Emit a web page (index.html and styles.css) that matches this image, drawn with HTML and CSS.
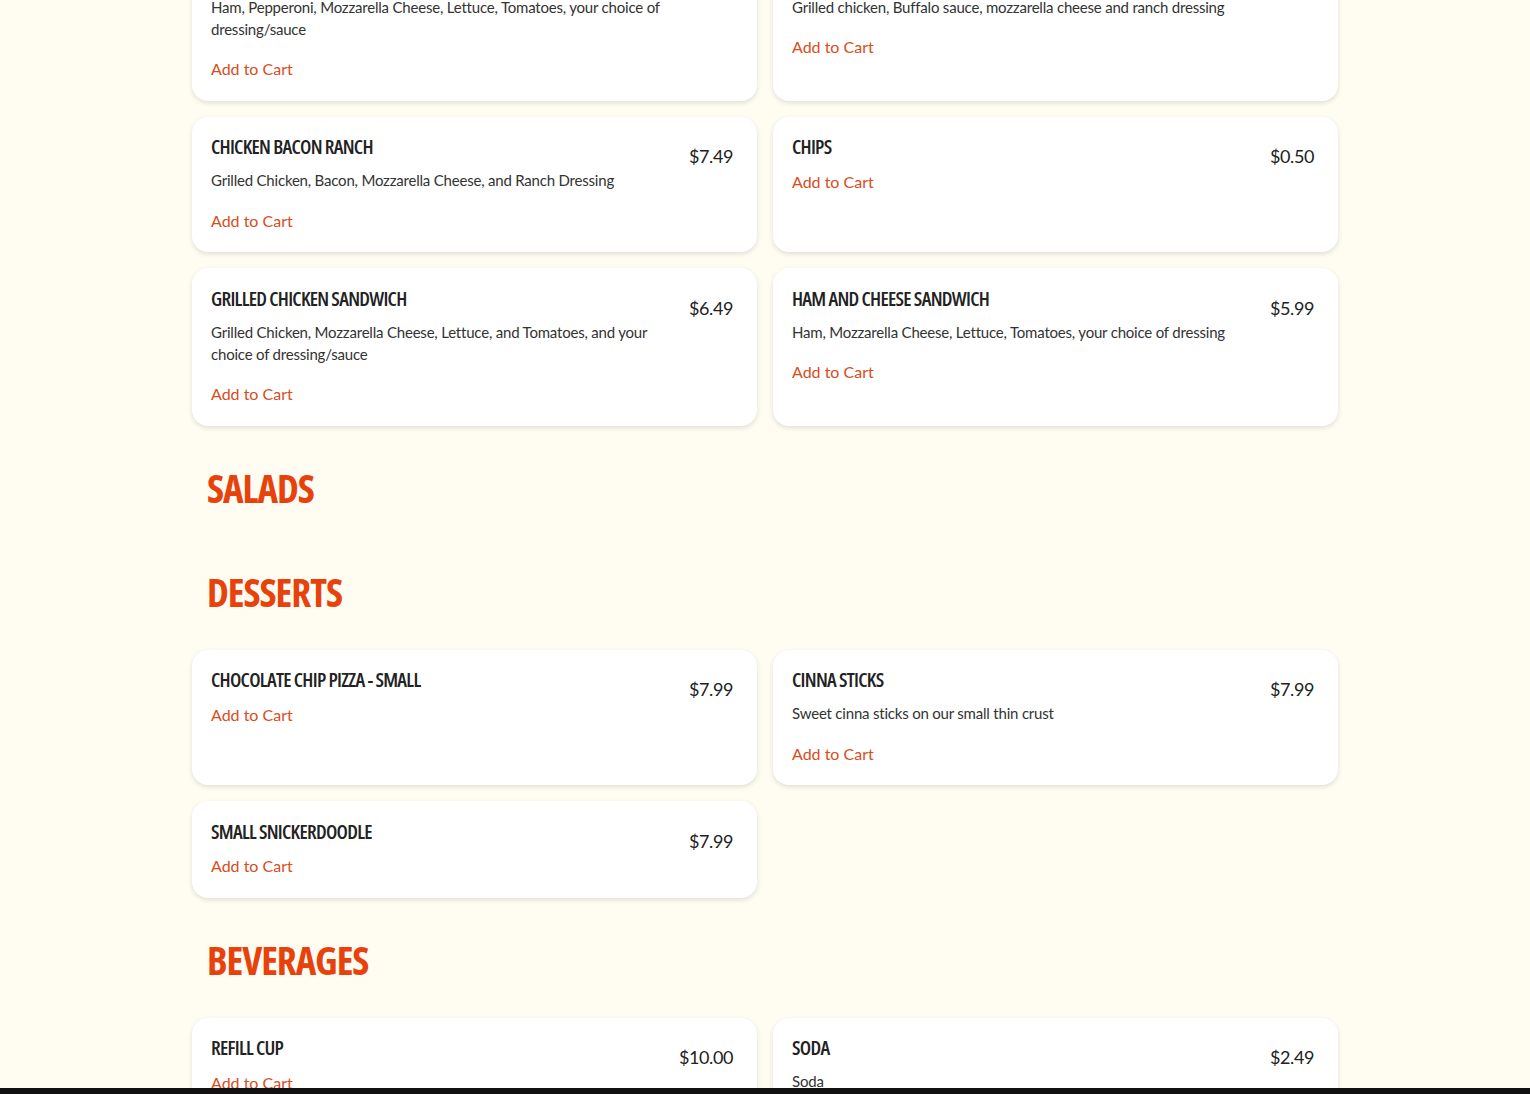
FILE: index.html
```html
<!DOCTYPE html>
<html lang="en">
<head>
<meta charset="utf-8">
<title>Menu</title>
<link rel="stylesheet" href="styles.css">
</head>
<body>
<main class="menu">
  <section class="section section-first">
    <div class="grid">
      <article class="card">
        <div class="info">
          <h3 class="title">Italian Sandwich</h3>
          <p class="desc">Ham, Pepperoni, Mozzarella Cheese, Lettuce, Tomatoes, your choice of dressing/sauce</p>
          <a class="add" href="#">Add to Cart</a>
        </div>
        <div class="price">$6.49</div>
      </article>
      <article class="card">
        <div class="info">
          <h3 class="title">Buffalo Chicken Sandwich</h3>
          <p class="desc">Grilled chicken, Buffalo sauce, mozzarella cheese and ranch dressing</p>
          <a class="add" href="#">Add to Cart</a>
        </div>
        <div class="price">$7.49</div>
      </article>
      <article class="card">
        <div class="info">
          <h3 class="title">Chicken Bacon Ranch</h3>
          <p class="desc">Grilled Chicken, Bacon, Mozzarella Cheese, and Ranch Dressing</p>
          <a class="add" href="#">Add to Cart</a>
        </div>
        <div class="price">$7.49</div>
      </article>
      <article class="card">
        <div class="info">
          <h3 class="title">Chips</h3>
          <a class="add" href="#">Add to Cart</a>
        </div>
        <div class="price">$0.50</div>
      </article>
      <article class="card">
        <div class="info">
          <h3 class="title">Grilled Chicken Sandwich</h3>
          <p class="desc">Grilled Chicken, Mozzarella Cheese, Lettuce, and Tomatoes, and your choice of dressing/sauce</p>
          <a class="add" href="#">Add to Cart</a>
        </div>
        <div class="price">$6.49</div>
      </article>
      <article class="card">
        <div class="info">
          <h3 class="title">Ham and Cheese Sandwich</h3>
          <p class="desc">Ham, Mozzarella Cheese, Lettuce, Tomatoes, your choice of dressing</p>
          <a class="add" href="#">Add to Cart</a>
        </div>
        <div class="price">$5.99</div>
      </article>
    </div>
  </section>

  <section class="section">
    <h2 class="section-title">Salads</h2>
  </section>

  <section class="section">
    <h2 class="section-title">Desserts</h2>
    <div class="grid">
      <article class="card">
        <div class="info">
          <h3 class="title">Chocolate Chip Pizza - Small</h3>
          <a class="add" href="#">Add to Cart</a>
        </div>
        <div class="price">$7.99</div>
      </article>
      <article class="card">
        <div class="info">
          <h3 class="title">Cinna Sticks</h3>
          <p class="desc">Sweet cinna sticks on our small thin crust</p>
          <a class="add" href="#">Add to Cart</a>
        </div>
        <div class="price">$7.99</div>
      </article>
      <article class="card">
        <div class="info">
          <h3 class="title">Small Snickerdoodle</h3>
          <a class="add" href="#">Add to Cart</a>
        </div>
        <div class="price">$7.99</div>
      </article>
    </div>
  </section>

  <section class="section">
    <h2 class="section-title">Beverages</h2>
    <div class="grid">
      <article class="card">
        <div class="info">
          <h3 class="title">Refill Cup</h3>
          <a class="add" href="#">Add to Cart</a>
        </div>
        <div class="price">$10.00</div>
      </article>
      <article class="card">
        <div class="info">
          <h3 class="title">Soda</h3>
          <p class="desc">Soda</p>
          <a class="add" href="#">Add to Cart</a>
        </div>
        <div class="price">$2.49</div>
      </article>
    </div>
  </section>
</main>
<div class="cart-bar"></div>
</body>
</html>
```
FILE: styles.css
```css
* { box-sizing: border-box; }

html, body {
  margin: 0;
  padding: 0;
  background: #fffcf1;
}

body {
  font-family: Lato, "Noto Sans", sans-serif;
  color: #2a2a2a;
}

.menu {
  max-width: 1146px;
  margin: -56.5px auto 0;
  padding-bottom: 80px;
}

.section {
  padding-top: 38px;
}

.section-first {
  padding-top: 0;
}

.section-title {
  margin: 0 0 18px;
  padding-left: 15px;
  font-family: "Open Sans", sans-serif;
  font-stretch: 75%;
  font-weight: 700;
  font-size: 39px;
  line-height: 48px;
  letter-spacing: -1px;
  text-transform: uppercase;
  color: #e8420c;
}

.grid {
  margin-top: 34px;
  display: grid;
  grid-template-columns: 1fr 1fr;
  gap: 16px;
}

.section-first .grid {
  margin-top: 0;
}

.card {
  display: flex;
  align-items: flex-start;
  gap: 20px;
  background: #ffffff;
  border-radius: 16px;
  box-shadow: 0 2px 5px rgba(0, 0, 0, 0.12);
  padding: 18.5px 24px 19.6px 19px;
}

.info {
  flex: 1;
  min-width: 0;
  display: flex;
  flex-direction: column;
  align-items: flex-start;
}

.title {
  margin: 0;
  font-family: "Open Sans", sans-serif;
  font-stretch: 75%;
  font-weight: 600;
  font-size: 20px;
  line-height: 24px;
  letter-spacing: -0.7px;
  text-transform: uppercase;
  color: #222222;
}

.desc {
  margin: 10px 0 7px;
  font-size: 15px;
  line-height: 22px;
  letter-spacing: -0.2px;
  color: #333333;
}

.add {
  margin-top: 10.4px;
  font-size: 16px;
  line-height: 24px;
  color: #d84d1c;
  text-decoration: none;
}

.price {
  margin-top: 8px;
  font-size: 18px;
  line-height: 26px;
  letter-spacing: -0.4px;
  color: #222222;
  white-space: nowrap;
}

.cart-bar {
  position: fixed;
  left: 0;
  right: 0;
  bottom: 0;
  height: 6px;
  background: #111111;
}
```
